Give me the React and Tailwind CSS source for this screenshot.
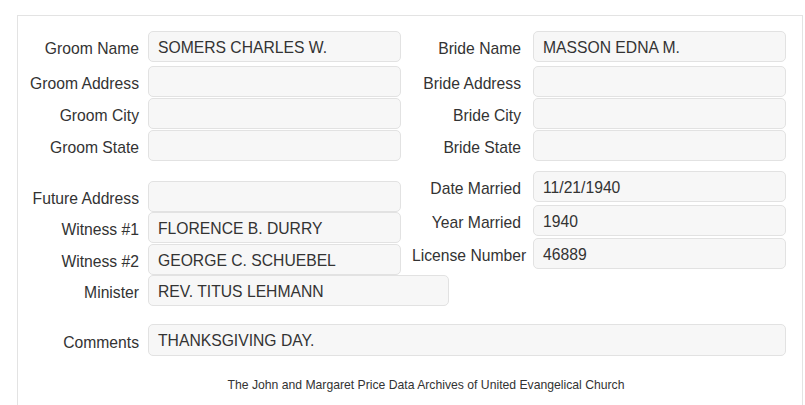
import React from "react";

const topLeft = [
    { label: "Groom Name", value: "SOMERS CHARLES W." },
    { label: "Groom Address", value: "", mt: "mt-[4px]" },
    { label: "Groom City", value: "", mt: "mt-px" },
    { label: "Groom State", value: "", mt: "mt-px" },
];

const topRight = [
    { label: "Bride Name", value: "MASSON EDNA M." },
    { label: "Bride Address", value: "", mt: "mt-[4px]" },
    { label: "Bride City", value: "", mt: "mt-px" },
    { label: "Bride State", value: "", mt: "mt-px" },
];

const lowLeft = [
    { label: "Future Address", value: "" },
    { label: "Witness #1", value: "FLORENCE B. DURRY" },
    { label: "Witness #2", value: "GEORGE C. SCHUEBEL", mt: "mt-[1px]" },
    { label: "Minister", value: "REV. TITUS LEHMANN", wide: true },
];

const lowRight = [
    { label: "Date Married", value: "11/21/1940" },
    { label: "Year Married", value: "1940", mt: "mt-[3px]" },
    { label: "License Number", value: "46889", mt: "mt-[2px]" },
];

function Field({ value, className }) {
    return (
        <div className={`flex shrink-0 items-center h-[31px] px-[9px] rounded-[5px] border border-[#e2e2e2] bg-[#f7f7f7] text-[15.7px] text-[#333] ${className}`}>
            <span className="whitespace-nowrap pt-[2px]">{value}</span>
        </div>
    );
}

function Row({ label, value, mt = "", labelW, gap, wide }) {
    return (
        <div className={`flex items-center ${mt}`}>
            <div className={`${labelW} shrink-0 pt-[5px] text-right text-[15.7px] text-[#333] whitespace-nowrap`}>{label}</div>
            <Field value={value} className={`${gap} ${wide ? "w-[301px]" : "w-[253px]"}`} />
        </div>
    );
}

export default function App() {
    return (
        <div className="w-[805px] h-[405px] overflow-hidden bg-white" style={{ fontFamily: '"Liberation Sans", Arial, sans-serif' }}>
            <div className="mt-[15px] ml-[17px] w-[786px] h-[420px] border border-[#e3e3e3] pt-[15px]">
                <div className="flex">
                    <div className="w-[394px] flex flex-col">
                        {topLeft.map((r) => (
                            <Row key={r.label} {...r} labelW="w-[121px]" gap="ml-[9px]" />
                        ))}
                    </div>
                    <div className="flex flex-col">
                        {topRight.map((r) => (
                            <Row key={r.label} {...r} labelW="w-[109px]" gap="ml-[12px]" />
                        ))}
                    </div>
                </div>
                <div className="flex mt-[10px]">
                    <div className="w-[394px] flex flex-col pt-[10px]">
                        {lowLeft.map((r) => (
                            <Row key={r.label} {...r} labelW="w-[121px]" gap="ml-[9px]" />
                        ))}
                    </div>
                    <div className="flex flex-col self-start">
                        {lowRight.map((r) => (
                            <Row key={r.label} {...r} labelW="w-[109px]" gap="ml-[12px]" />
                        ))}
                    </div>
                </div>
                <div className="flex items-center mt-[18px]">
                    <div className="w-[121px] shrink-0 pt-[5px] text-right text-[15.7px] text-[#333]">Comments</div>
                    <Field value="THANKSGIVING DAY." className="ml-[9px] w-[638px] h-[32px]" />
                </div>
                <div className="mt-[21px] pl-[32px] text-center text-[12.2px] leading-[16px] text-[#333]">
                    The John and Margaret Price Data Archives of United Evangelical Church
                </div>
            </div>
        </div>
    );
}
